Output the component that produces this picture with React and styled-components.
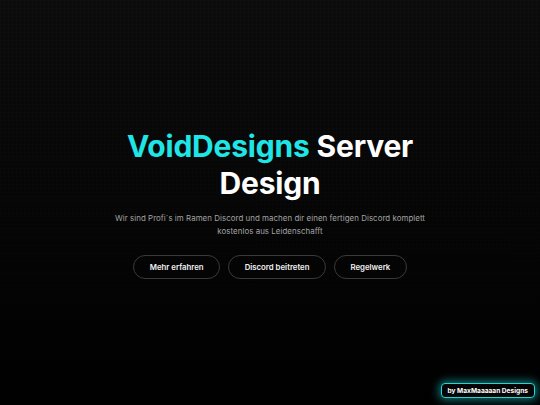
import React from "react";
import styled, { createGlobalStyle } from "styled-components";

const Global = createGlobalStyle`
  html, body { margin: 0; padding: 0; height: 100%; background: #000; }
  #root { height: 100%; }
  * { box-sizing: border-box; }
`;

const Page = styled.div`
  width: 100%;
  height: 405px;
  position: relative;
  overflow: hidden;
  background:
    linear-gradient(to bottom, rgba(0,0,0,0) 0%, rgba(0,0,0,0.6) 60%, #000 100%),
    repeating-linear-gradient(90deg, rgba(255,255,255,0.012) 0 1px, transparent 1px 4px),
    repeating-linear-gradient(0deg, rgba(255,255,255,0.012) 0 1px, transparent 1px 4px),
    #0b0b0b;
  font-family: Inter, "Liberation Sans", sans-serif;
  display: flex;
  flex-direction: column;
  align-items: center;
  justify-content: center;
  padding-top: 2px;
`;

const Hero = styled.section`
  display: flex;
  flex-direction: column;
  align-items: center;
  text-align: center;
`;

const Title = styled.h1`
  margin: 0;
  font-size: 30px;
  line-height: 37px;
  font-weight: 700;
  color: #fff;
  letter-spacing: -0.2px;
`;

const Accent = styled.span`
  color: #1fe6e6;
`;

const Sub = styled.p`
  margin: 10px 0 0;
  width: 320px;
  font-size: 7.9px;
  line-height: 12.5px;
  color: #a3a3a3;
  letter-spacing: 0.05px;
`;

const Buttons = styled.div`
  display: flex;
  gap: 8px;
  margin-top: 18px;
`;

const Button = styled.button`
  height: 24px;
  padding: 0 ${(p) => p.$px}px;
  border-radius: 12px;
  border: 1px solid #3a3a3a;
  background: transparent;
  color: #f2f2f2;
  font-family: Inter, "Liberation Sans", sans-serif;
  font-size: 7.8px;
  font-weight: 600;
  cursor: pointer;
`;

const Badge = styled.div`
  position: absolute;
  right: 5px;
  bottom: 7px;
  height: 15px;
  padding: 0 6px;
  display: flex;
  align-items: center;
  background: #050505;
  border: 1.5px solid #23d5d5;
  border-radius: 4px;
  box-shadow: 0 0 8px 2px rgba(35, 213, 213, 0.55);
  color: #fff;
  font-size: 6.6px;
  font-weight: 700;
`;

export default function App() {
  return (
    <>
      <Global />
      <Page>
        <Hero>
          <Title>
            <Accent>VoidDesigns</Accent> Server
            <br />
            Design
          </Title>
          <Sub>
            Wir sind Profi´s im Ramen Discord und machen dir einen fertigen Discord komplett kostenlos aus Leidenschafft
          </Sub>
          <Buttons>
            <Button $px={15.5}>Mehr erfahren</Button>
            <Button $px={15.5}>Discord beitreten</Button>
            <Button $px={15.5}>Regelwerk</Button>
          </Buttons>
        </Hero>
        <Badge>by MaxMaaaaan Designs</Badge>
      </Page>
    </>
  );
}
